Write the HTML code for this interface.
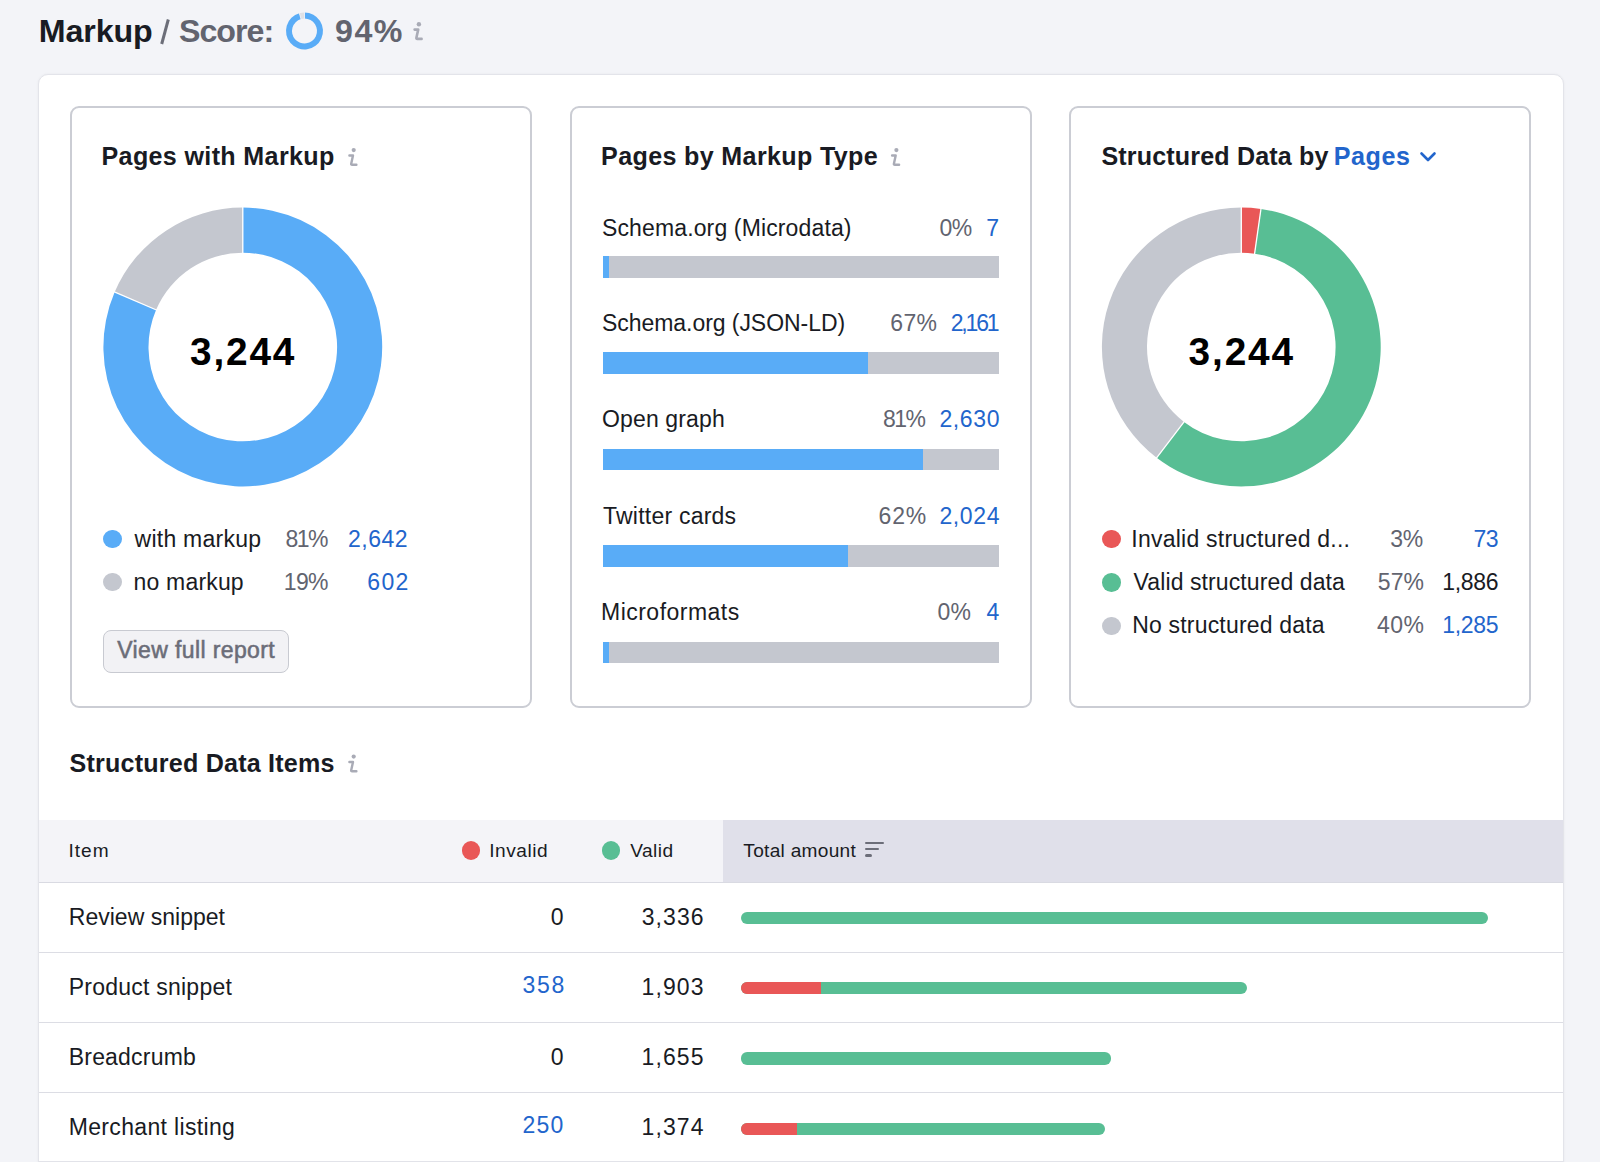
<!DOCTYPE html>
<html><head><meta charset="utf-8"><style>
html,body{margin:0;padding:0;overflow:hidden;}
body{width:1600px;height:1162px;overflow:hidden;background:#f3f4f8;position:relative;font-family:"Liberation Sans", sans-serif;}
.t{position:absolute;white-space:pre;}
.b{position:absolute;}
</style></head><body>
<div class="b" style="left:37.6px;top:74px;width:1526px;height:1200px;background:#fff;border:1px solid #e3e4ea;border-radius:10px;box-sizing:border-box;box-shadow:0 0 3px rgba(25,27,35,0.05);"></div>
<div class="b" style="left:70px;top:105.5px;width:462px;height:602px;border:2px solid #cbcdd4;border-radius:9px;box-sizing:border-box;"></div>
<div class="b" style="left:570px;top:105.5px;width:462px;height:602px;border:2px solid #cbcdd4;border-radius:9px;box-sizing:border-box;"></div>
<div class="b" style="left:1069px;top:105.5px;width:462px;height:602px;border:2px solid #cbcdd4;border-radius:9px;box-sizing:border-box;"></div>
<svg class="b" style="left:0;top:0" width="1600" height="1162">
<path d="M242.80,207.60 A139.4,139.4 0 1 1 114.67,292.10 L156.12,309.86 A94.3,94.3 0 1 0 242.80,252.70 Z" fill="#59acf7"/><path d="M114.67,292.10 A139.4,139.4 0 0 1 242.80,207.60 L242.80,252.70 A94.3,94.3 0 0 0 156.12,309.86 Z" fill="#c4c7cf"/><line x1="242.80" y1="253.70" x2="242.80" y2="206.60" stroke="#fff" stroke-width="1.3"/><line x1="157.04" y1="310.25" x2="113.75" y2="291.70" stroke="#fff" stroke-width="1.3"/>
<path d="M1241.30,207.60 A139.4,139.4 0 0 1 1260.94,208.99 L1254.59,253.64 A94.3,94.3 0 0 0 1241.30,252.70 Z" fill="#e95757"/><path d="M1260.94,208.99 A139.4,139.4 0 1 1 1156.64,457.74 L1184.03,421.92 A94.3,94.3 0 1 0 1254.59,253.64 Z" fill="#58be94"/><path d="M1156.64,457.74 A139.4,139.4 0 0 1 1241.30,207.60 L1241.30,252.70 A94.3,94.3 0 0 0 1184.03,421.92 Z" fill="#c4c7cf"/><line x1="1241.30" y1="253.70" x2="1241.30" y2="206.60" stroke="#fff" stroke-width="1.3"/><line x1="1254.45" y1="254.63" x2="1261.09" y2="208.00" stroke="#fff" stroke-width="1.3"/><line x1="1184.63" y1="421.12" x2="1156.03" y2="458.54" stroke="#fff" stroke-width="1.3"/>
<path d="M304.50,12.50 A18.5,18.5 0 1 1 299.34,13.23 L301.01,19.00 A12.5,12.5 0 1 0 304.50,18.50 Z" fill="#59acf7"/><path d="M299.34,13.23 A18.5,18.5 0 0 1 304.50,12.50 L304.50,18.50 A12.5,12.5 0 0 0 301.01,19.00 Z" fill="#dfe1e6"/><line x1="304.50" y1="19.50" x2="304.50" y2="11.50" stroke="#f3f4f8" stroke-width="0.8"/><line x1="301.29" y1="19.96" x2="299.06" y2="12.27" stroke="#f3f4f8" stroke-width="0.8"/>
<path d="M168.3,19.5 L161.7,44" stroke="#6c6e79" stroke-width="3" stroke-linecap="butt"/>
<path d="M1421.5,153.5 L1428,160 L1434.5,153.5" fill="none" stroke="#2265cc" stroke-width="2.6" stroke-linecap="round" stroke-linejoin="round"/>
</svg>
<div class="b" style="left:103px;top:529.5px;width:18.5px;height:18.5px;background:#59acf7;border-radius:50%;"></div>
<div class="b" style="left:103px;top:572.5px;width:18.5px;height:18.5px;background:#c4c7cf;border-radius:50%;"></div>
<div class="b" style="left:103px;top:629.5px;width:185.5px;height:43px;background:#f2f2f5;border:1.5px solid #c8cad1;border-radius:8px;box-sizing:border-box;"></div>
<div class="b" style="left:603px;top:256.0px;width:396px;height:21.5px;background:#c4c7cf;"></div>
<div class="b" style="left:603px;top:256.0px;width:6px;height:21.5px;background:#59acf7;"></div>
<div class="b" style="left:603px;top:352.4px;width:396px;height:21.5px;background:#c4c7cf;"></div>
<div class="b" style="left:603px;top:352.4px;width:265.20000000000005px;height:21.5px;background:#59acf7;"></div>
<div class="b" style="left:603px;top:448.8px;width:396px;height:21.5px;background:#c4c7cf;"></div>
<div class="b" style="left:603px;top:448.8px;width:320.29999999999995px;height:21.5px;background:#59acf7;"></div>
<div class="b" style="left:603px;top:545.2px;width:396px;height:21.5px;background:#c4c7cf;"></div>
<div class="b" style="left:603px;top:545.2px;width:245px;height:21.5px;background:#59acf7;"></div>
<div class="b" style="left:603px;top:641.6px;width:396px;height:21.5px;background:#c4c7cf;"></div>
<div class="b" style="left:603px;top:641.6px;width:6px;height:21.5px;background:#59acf7;"></div>
<div class="b" style="left:1102px;top:529.8000000000001px;width:18.6px;height:18.6px;background:#e95757;border-radius:50%;"></div>
<div class="b" style="left:1102px;top:573.1500000000001px;width:18.6px;height:18.6px;background:#58be94;border-radius:50%;"></div>
<div class="b" style="left:1102px;top:616.5000000000001px;width:18.6px;height:18.6px;background:#c4c7cf;border-radius:50%;"></div>
<svg class="b" style="left:0;top:0;overflow:visible" width="1" height="1"><circle cx="353.7" cy="150.1" r="2.1" fill="#a9abb6"/><path d="M349.40,155.50 L353.00,155.50 L351.20,163.70 Q350.95,164.80 352.10,164.80 L356.40,164.80" fill="none" stroke="#a9abb6" stroke-width="2.4" stroke-linecap="round" stroke-linejoin="round"/></svg>
<svg class="b" style="left:0;top:0;overflow:visible" width="1" height="1"><circle cx="896.4" cy="150.1" r="2.1" fill="#a9abb6"/><path d="M892.10,155.50 L895.70,155.50 L893.90,163.70 Q893.65,164.80 894.80,164.80 L899.10,164.80" fill="none" stroke="#a9abb6" stroke-width="2.4" stroke-linecap="round" stroke-linejoin="round"/></svg>
<svg class="b" style="left:0;top:0;overflow:visible" width="1" height="1"><circle cx="353.7" cy="756.6" r="2.1" fill="#a9abb6"/><path d="M349.40,762.00 L353.00,762.00 L351.20,770.20 Q350.95,771.30 352.10,771.30 L356.40,771.30" fill="none" stroke="#a9abb6" stroke-width="2.4" stroke-linecap="round" stroke-linejoin="round"/></svg>
<svg class="b" style="left:0;top:0;overflow:visible" width="1" height="1"><circle cx="418.9" cy="24.2" r="2.2" fill="#a9abb6"/><path d="M414.60,29.60 L418.20,29.60 L416.40,37.80 Q416.15,38.90 417.30,38.90 L421.60,38.90" fill="none" stroke="#a9abb6" stroke-width="2.6" stroke-linecap="round" stroke-linejoin="round"/></svg>
<div class="b" style="left:38.6px;top:820px;width:1524px;height:62.5px;background:#f4f4f8;"></div>
<div class="b" style="left:723.2px;top:820px;width:839.4px;height:62.5px;background:#e0e0ea;"></div>
<div class="b" style="left:38.6px;top:882px;width:1524px;height:1.2px;background:#d9dae2;"></div>
<div class="b" style="left:461.6px;top:841px;width:18.7px;height:18.7px;background:#e95757;border-radius:50%;"></div>
<div class="b" style="left:601.6px;top:841px;width:18.7px;height:18.7px;background:#58be94;border-radius:50%;"></div>
<div class="b" style="left:865px;top:841.8px;width:18.6px;height:2.5px;background:#6c6e79;border-radius:2px;"></div>
<div class="b" style="left:865px;top:847.8px;width:13.5px;height:2.5px;background:#6c6e79;border-radius:2px;"></div>
<div class="b" style="left:865px;top:854.2px;width:6.5px;height:2.5px;background:#6c6e79;border-radius:2px;"></div>
<div class="b" style="left:741.3px;top:912.2px;width:746.6000000000001px;height:12.2px;background:#58be94;border-radius:6.1px;"></div>
<div class="b" style="left:38.6px;top:952.1px;width:1524px;height:1.1px;background:#dcdde4;"></div>
<div class="b" style="left:741.3px;top:982.3000000000001px;width:505.4000000000001px;height:12.2px;background:#58be94;border-radius:6.1px;"></div>
<div class="b" style="left:741.3px;top:982.3000000000001px;width:79.70000000000005px;height:12.2px;background:#e95757;border-radius:6.1px 0 0 6.1px;"></div>
<div class="b" style="left:38.6px;top:1022.1px;width:1524px;height:1.1px;background:#dcdde4;"></div>
<div class="b" style="left:741.3px;top:1052.4px;width:370.20000000000005px;height:12.2px;background:#58be94;border-radius:6.1px;"></div>
<div class="b" style="left:38.6px;top:1092.1px;width:1524px;height:1.1px;background:#dcdde4;"></div>
<div class="b" style="left:741.3px;top:1122.5px;width:364.0px;height:12.2px;background:#58be94;border-radius:6.1px;"></div>
<div class="b" style="left:741.3px;top:1122.5px;width:55.700000000000045px;height:12.2px;background:#e95757;border-radius:6.1px 0 0 6.1px;"></div>
<div class="b" style="left:38.6px;top:1162.1px;width:1524px;height:1.1px;background:#dcdde4;"></div>
<div class="b" style="left:38.6px;top:1161px;width:1524px;height:1px;background:#e2e3e9;"></div>
<span class="t" style="left:38.75px;top:14.74px;font-size:32.2px;line-height:32.2px;color:#191b23;font-weight:700;letter-spacing:-0.100px;">Markup</span>
<span class="t" style="left:179.00px;top:14.74px;font-size:32.2px;line-height:32.2px;color:#62646f;font-weight:700;letter-spacing:-1.000px;">Score:</span>
<span class="t" style="left:335.00px;top:14.74px;font-size:32.2px;line-height:32.2px;color:#62646f;font-weight:700;letter-spacing:1.500px;">94%</span>
<span class="t" style="left:101.50px;top:144.25px;font-size:25.1px;line-height:25.1px;color:#191b23;font-weight:700;letter-spacing:0.344px;">Pages with Markup</span>
<span class="t" style="left:601.10px;top:144.25px;font-size:25.1px;line-height:25.1px;color:#191b23;font-weight:700;letter-spacing:0.342px;">Pages by Markup Type</span>
<span class="t" style="left:1101.40px;top:144.25px;font-size:25.1px;line-height:25.1px;color:#191b23;font-weight:700;letter-spacing:0.153px;">Structured Data by</span>
<span class="t" style="left:1333.70px;top:144.25px;font-size:25.1px;line-height:25.1px;color:#2265cc;font-weight:700;letter-spacing:0.575px;">Pages</span>
<span class="t" style="left:69.50px;top:751.25px;font-size:25.1px;line-height:25.1px;color:#191b23;font-weight:700;letter-spacing:0.212px;">Structured Data Items</span>
<span class="t" style="left:190.00px;top:333.06px;font-size:38.8px;line-height:38.8px;color:#000;font-weight:700;letter-spacing:1.825px;">3,244</span>
<span class="t" style="left:1188.60px;top:333.06px;font-size:38.8px;line-height:38.8px;color:#000;font-weight:700;letter-spacing:1.850px;">3,244</span>
<span class="t" style="left:134.60px;top:528.03px;font-size:23px;line-height:23px;color:#191b23;font-weight:400;letter-spacing:0.240px;">with markup</span>
<span class="t" style="left:133.60px;top:570.53px;font-size:23px;line-height:23px;color:#191b23;font-weight:400;letter-spacing:0.175px;">no markup</span>
<span class="t" style="left:285.40px;top:528.03px;font-size:23px;line-height:23px;color:#62646f;font-weight:400;letter-spacing:-1.450px;">81%</span>
<span class="t" style="left:283.80px;top:570.53px;font-size:23px;line-height:23px;color:#62646f;font-weight:400;letter-spacing:-0.650px;">19%</span>
<span class="t" style="left:348.00px;top:528.03px;font-size:23px;line-height:23px;color:#2265cc;font-weight:400;letter-spacing:0.500px;">2,642</span>
<span class="t" style="left:367.30px;top:570.53px;font-size:23px;line-height:23px;color:#2265cc;font-weight:400;letter-spacing:1.350px;">602</span>
<span class="t" style="left:117.30px;top:638.73px;font-size:23px;line-height:23px;color:#6b6d78;font-weight:400;letter-spacing:0.380px;-webkit-text-stroke:0.55px #6b6d78;">View full report</span>
<span class="t" style="left:602.00px;top:216.53px;font-size:23px;line-height:23px;color:#191b23;font-weight:400;letter-spacing:0.133px;">Schema.org (Microdata)</span>
<span class="t" style="left:939.40px;top:216.53px;font-size:23px;line-height:23px;color:#62646f;font-weight:400;letter-spacing:-0.500px;">0%</span>
<span class="t" style="left:986.25px;top:216.53px;font-size:23px;line-height:23px;color:#2265cc;font-weight:400;letter-spacing:0.000px;">7</span>
<span class="t" style="left:602.00px;top:311.73px;font-size:23px;line-height:23px;color:#191b23;font-weight:400;letter-spacing:-0.053px;">Schema.org (JSON-LD)</span>
<span class="t" style="left:890.30px;top:311.73px;font-size:23px;line-height:23px;color:#62646f;font-weight:400;letter-spacing:0.350px;">67%</span>
<span class="t" style="left:950.70px;top:311.73px;font-size:23px;line-height:23px;color:#2265cc;font-weight:400;letter-spacing:-2.175px;">2,161</span>
<span class="t" style="left:602.00px;top:408.03px;font-size:23px;line-height:23px;color:#191b23;font-weight:400;letter-spacing:0.144px;">Open graph</span>
<span class="t" style="left:883.00px;top:408.03px;font-size:23px;line-height:23px;color:#62646f;font-weight:400;letter-spacing:-1.500px;">81%</span>
<span class="t" style="left:939.40px;top:408.03px;font-size:23px;line-height:23px;color:#2265cc;font-weight:400;letter-spacing:0.650px;">2,630</span>
<span class="t" style="left:603.00px;top:504.63px;font-size:23px;line-height:23px;color:#191b23;font-weight:400;letter-spacing:0.225px;">Twitter cards</span>
<span class="t" style="left:878.50px;top:504.63px;font-size:23px;line-height:23px;color:#62646f;font-weight:400;letter-spacing:0.850px;">62%</span>
<span class="t" style="left:939.40px;top:504.63px;font-size:23px;line-height:23px;color:#2265cc;font-weight:400;letter-spacing:0.650px;">2,024</span>
<span class="t" style="left:601.00px;top:601.03px;font-size:23px;line-height:23px;color:#191b23;font-weight:400;letter-spacing:0.482px;">Microformats</span>
<span class="t" style="left:937.60px;top:601.03px;font-size:23px;line-height:23px;color:#62646f;font-weight:400;letter-spacing:0.000px;">0%</span>
<span class="t" style="left:986.40px;top:601.03px;font-size:23px;line-height:23px;color:#2265cc;font-weight:400;letter-spacing:0.000px;">4</span>
<span class="t" style="left:1131.30px;top:527.73px;font-size:23px;line-height:23px;color:#191b23;font-weight:400;letter-spacing:0.236px;">Invalid structured d...</span>
<span class="t" style="left:1390.30px;top:527.73px;font-size:23px;line-height:23px;color:#62646f;font-weight:400;letter-spacing:-0.300px;">3%</span>
<span class="t" style="left:1473.50px;top:527.73px;font-size:23px;line-height:23px;color:#2265cc;font-weight:400;letter-spacing:-0.500px;">73</span>
<span class="t" style="left:1133.60px;top:571.08px;font-size:23px;line-height:23px;color:#191b23;font-weight:400;letter-spacing:0.100px;">Valid structured data</span>
<span class="t" style="left:1377.70px;top:571.08px;font-size:23px;line-height:23px;color:#62646f;font-weight:400;letter-spacing:0.150px;">57%</span>
<span class="t" style="left:1442.30px;top:571.08px;font-size:23px;line-height:23px;color:#191b23;font-weight:400;letter-spacing:-0.325px;">1,886</span>
<span class="t" style="left:1132.20px;top:614.43px;font-size:23px;line-height:23px;color:#191b23;font-weight:400;letter-spacing:0.188px;">No structured data</span>
<span class="t" style="left:1377.00px;top:614.43px;font-size:23px;line-height:23px;color:#62646f;font-weight:400;letter-spacing:0.500px;">40%</span>
<span class="t" style="left:1442.30px;top:614.43px;font-size:23px;line-height:23px;color:#2265cc;font-weight:400;letter-spacing:-0.325px;">1,285</span>
<span class="t" style="left:68.50px;top:840.83px;font-size:19.1px;line-height:19.1px;color:#191b23;font-weight:400;letter-spacing:1.000px;">Item</span>
<span class="t" style="left:489.20px;top:840.83px;font-size:19.1px;line-height:19.1px;color:#191b23;font-weight:400;letter-spacing:0.533px;">Invalid</span>
<span class="t" style="left:630.30px;top:840.83px;font-size:19.1px;line-height:19.1px;color:#191b23;font-weight:400;letter-spacing:0.425px;">Valid</span>
<span class="t" style="left:743.30px;top:840.83px;font-size:19.1px;line-height:19.1px;color:#191b23;font-weight:400;letter-spacing:0.291px;">Total amount</span>
<span class="t" style="left:68.75px;top:905.53px;font-size:23px;line-height:23px;color:#191b23;font-weight:400;letter-spacing:0.019px;">Review snippet</span>
<span class="t" style="left:550.80px;top:905.53px;font-size:23px;line-height:23px;color:#191b23;font-weight:400;letter-spacing:0.000px;">0</span>
<span class="t" style="left:641.70px;top:905.53px;font-size:23px;line-height:23px;color:#191b23;font-weight:400;letter-spacing:1.075px;">3,336</span>
<span class="t" style="left:68.75px;top:975.53px;font-size:23px;line-height:23px;color:#191b23;font-weight:400;letter-spacing:0.232px;">Product snippet</span>
<span class="t" style="left:522.40px;top:973.73px;font-size:23px;line-height:23px;color:#2265cc;font-weight:400;letter-spacing:1.800px;">358</span>
<span class="t" style="left:641.60px;top:975.53px;font-size:23px;line-height:23px;color:#191b23;font-weight:400;letter-spacing:1.100px;">1,903</span>
<span class="t" style="left:68.75px;top:1045.53px;font-size:23px;line-height:23px;color:#191b23;font-weight:400;letter-spacing:0.194px;">Breadcrumb</span>
<span class="t" style="left:550.75px;top:1045.53px;font-size:23px;line-height:23px;color:#191b23;font-weight:400;letter-spacing:0.000px;">0</span>
<span class="t" style="left:641.60px;top:1045.53px;font-size:23px;line-height:23px;color:#191b23;font-weight:400;letter-spacing:1.100px;">1,655</span>
<span class="t" style="left:68.75px;top:1115.53px;font-size:23px;line-height:23px;color:#191b23;font-weight:400;letter-spacing:0.333px;">Merchant listing</span>
<span class="t" style="left:522.40px;top:1113.53px;font-size:23px;line-height:23px;color:#2265cc;font-weight:400;letter-spacing:1.300px;">250</span>
<span class="t" style="left:641.60px;top:1115.53px;font-size:23px;line-height:23px;color:#191b23;font-weight:400;letter-spacing:1.100px;">1,374</span>
</body></html>
